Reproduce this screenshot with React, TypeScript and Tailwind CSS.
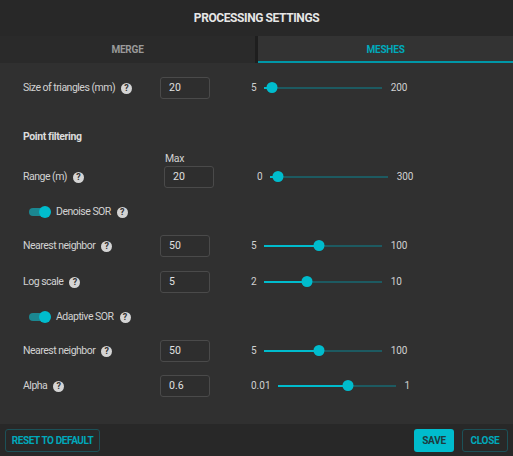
import React from "react";

const F = { fontFamily: "'Roboto', 'Liberation Sans', sans-serif" };

function Help() {
  return (
    <span className="ml-[6px] inline-flex h-[11px] w-[11px] items-center justify-center rounded-full bg-[#d4d4d4] text-[9px] font-bold leading-none tracking-normal text-[#303030]">
      ?
    </span>
  );
}

function Label({ text }: { text: string }) {
  return (
    <div className="flex items-center text-[10.5px] leading-[14px] tracking-[-0.5px] text-[#d2d2d2]">
      <span>{text}</span>
      <Help />
    </div>
  );
}

function Input({ value }: { value: string }) {
  return (
    <div className="flex h-[22px] w-[50px] items-center rounded-[3px] border border-[#4a4a4a] bg-[#2e2e2e] pl-[8px] text-[10.5px] leading-[14px] text-[#e0e0e0]">
      {value}
    </div>
  );
}

function Slider({ min, max, pct }: { min: string; max: string; pct: number }) {
  return (
    <div className="flex items-center text-[10px] leading-[14px] text-[#d0d0d0]">
      <span>{min}</span>
      <div className="relative ml-[7px] h-[2px] w-[118px] bg-[#1d5a61]">
        <div className="absolute left-0 top-0 h-[2px] bg-[#00bccd]" style={{ width: `${pct}%` }} />
        <div
          className="absolute top-[-5px] h-[11px] w-[11px] -translate-x-1/2 rounded-full bg-[#00bccd]"
          style={{ left: `${pct}%` }}
        />
      </div>
      <span className="ml-[9px]">{max}</span>
    </div>
  );
}

function Toggle() {
  return (
    <div className="relative h-[12px] w-[22px]">
      <div className="absolute left-0 top-[2px] h-[8px] w-[20px] rounded-full bg-[#1b8791]" />
      <div className="absolute right-0 top-0 h-[12px] w-[12px] rounded-full bg-[#00bccd]" />
    </div>
  );
}

function Row({ label, value, min, max, pct, mt }: { label: string; value: string; min: string; max: string; pct: number; mt: string }) {
  return (
    <div className={`flex h-[22px] items-center ${mt}`}>
      <div className="w-[137px]">
        <Label text={label} />
      </div>
      <Input value={value} />
      <div className="ml-[41px]">
        <Slider min={min} max={max} pct={pct} />
      </div>
    </div>
  );
}

function ToggleRow({ label, mt }: { label: string; mt: string }) {
  return (
    <div className={`flex h-[12px] items-center pl-[6px] ${mt}`}>
      <Toggle />
      <span className="ml-[5px]">
        <Label text={label} />
      </span>
    </div>
  );
}

export default function App() {
  return (
    <div className="flex h-[456px] w-[513px] flex-col bg-[#303030]" style={F}>
      <div className="flex h-[36px] items-center justify-center bg-[#282828] text-[12px] font-bold tracking-[-0.4px] text-[#e6e6e6]">
        PROCESSING SETTINGS
      </div>
      <div className="flex h-[27px] bg-[#282828]">
        <div className="flex w-[255px] items-center justify-center bg-[#2a2a2a] text-[10px] font-bold tracking-[-0.2px] text-[#9a9a9a]">
          MERGE
        </div>
        <div className="w-[3px] bg-[#1e1e1e]" />
        <div className="flex flex-1 items-center justify-center border-b-2 border-[#0097a7] bg-[#333333] pt-[2px] text-[10px] font-bold tracking-[-0.2px] text-[#00a9bb]">
          MESHES
        </div>
      </div>
      <div className="flex flex-1 flex-col pl-[23px]">
        <Row label="Size of triangles (mm)" value="20" min="5" max="200" pct={7} mt="mt-[14px]" />
        <div className="mt-[31px] text-[10.5px] font-bold leading-[14px] tracking-[-0.4px] text-[#dcdcdc]">
          Point filtering
        </div>
        <div className="mt-[8px] pl-[142px] text-[10.5px] leading-[14px] tracking-[-0.3px] text-[#d2d2d2]">Max</div>
        <div className="mt-0 flex h-[22px] items-center">
          <div className="w-[141px]">
            <Label text="Range (m)" />
          </div>
          <Input value="20" />
          <div className="ml-[43px]">
            <Slider min="0" max="300" pct={7} />
          </div>
        </div>
        <ToggleRow label="Denoise SOR" mt="mt-[18px]" />
        <Row label="Nearest neighbor" value="50" min="5" max="100" pct={47} mt="mt-[17px]" />
        <Row label="Log scale" value="5" min="2" max="10" pct={37} mt="mt-[14px]" />
        <ToggleRow label="Adaptive SOR" mt="mt-[18px]" />
        <Row label="Nearest neighbor" value="50" min="5" max="100" pct={47} mt="mt-[17px]" />
        <Row label="Alpha" value="0.6" min="0.01" max="1" pct={60} mt="mt-[13px]" />
      </div>
      <div className="flex h-[32px] items-center bg-[#282828] px-[5px]">
        <div className="flex h-[23px] w-[95px] items-center justify-center rounded-[3px] border border-[#1c5158] text-[10px] font-bold tracking-[-0.4px] text-[#00a9bb]">
          RESET TO DEFAULT
        </div>
        <div className="flex-1" />
        <div className="flex h-[23px] w-[40px] items-center justify-center rounded-[3px] bg-[#00bccd] text-[10px] font-bold tracking-[-0.3px] text-[#1e3a3e]">
          SAVE
        </div>
        <div className="ml-[8px] flex h-[23px] w-[46px] items-center justify-center rounded-[3px] border border-[#1c5158] text-[10px] font-bold tracking-[-0.3px] text-[#00a9bb]">
          CLOSE
        </div>
      </div>
    </div>
  );
}
